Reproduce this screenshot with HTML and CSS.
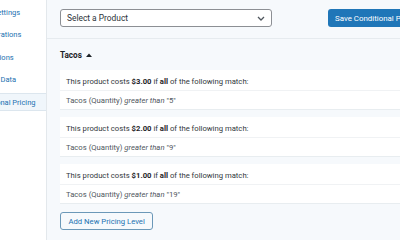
FILE: index.html
```html
<!DOCTYPE html>
<html lang="en">
<head>
  <meta charset="UTF-8">
  <meta name="viewport" content="width=device-width, initial-scale=1.0">
  <title>Conditional Pricing</title>
  <link rel="stylesheet" href="styles.css">
</head>
<body>
  <aside class="menu">
    <ul>
      <li><a href="#">Basic Settings</a></li>
      <li><a href="#">Configurations</a></li>
      <li><a href="#">Translations</a></li>
      <li><a href="#">Product Data</a></li>
      <li class="ativo"><a href="#">Conditional Pricing</a></li>
    </ul>
  </aside>

  <main class="conteudo">
    <div class="topo">
      <div class="seletor">
        <span>Select a Product</span>
        <svg width="8" height="5" viewBox="0 0 8 5"><path d="M1 1l3 3l3-3" fill="none" stroke="#50575e" stroke-width="1.3"/></svg>
      </div>
      <button class="salvar">Save Conditional Pricing</button>
    </div>

    <div class="produto">
      <b>Tacos</b>
      <svg width="6" height="4" viewBox="0 0 6 4"><path d="M0 4L3 0.5L6 4z" fill="#1d2327"/></svg>
    </div>

    <div class="niveis">
      <div class="nivel">
        <div class="linha">This product costs <b>$3.00</b> if <b>all</b> of the following match:</div>
        <div class="linha regra">Tacos (Quantity) <i>greater than</i> "5"</div>
      </div>
      <div class="nivel">
        <div class="linha">This product costs <b>$2.00</b> if <b>all</b> of the following match:</div>
        <div class="linha regra">Tacos (Quantity) <i>greater than</i> "9"</div>
      </div>
      <div class="nivel">
        <div class="linha">This product costs <b>$1.00</b> if <b>all</b> of the following match:</div>
        <div class="linha regra">Tacos (Quantity) <i>greater than</i> "19"</div>
      </div>
    </div>

    <button class="adicionar">Add New Pricing Level</button>
  </main>
</body>
</html>
```

FILE: styles.css
```css
body {
  margin: 0;
  height: 240px;
  display: flex;
  font-family: Roboto, "Liberation Sans", sans-serif;
  font-size: 7.7px;
  color: #32373c;
  overflow: hidden;
}
.menu {
  width: 46px;
  flex-shrink: 0;
  background-color: #ffffff;
  border-right: 1px solid #e3e8ec;
  overflow: hidden;
}
.menu ul {
  list-style: none;
  margin: 3px 0 0 -27.5px;
  padding: 0;
  display: flex;
  flex-direction: column;
  gap: 4.5px;
  width: 74px;
}
.menu li {
  height: 18px;
  display: flex;
  align-items: center;
  white-space: nowrap;
  border-top: 1px solid transparent;
  border-bottom: 1px solid transparent;
  box-sizing: border-box;
}
.menu a {
  color: #2271b1;
  text-decoration: none;
  font-size: 7.5px;
}
.menu .ativo {
  background-color: #f0f6fb;
  border-color: #dce6ee;
}
.conteudo {
  flex: 1;
  min-width: 0;
  background-color: #f6f9fc;
  overflow: hidden;
}
.topo {
  display: flex;
  align-items: center;
  gap: 56px;
  padding: 9px 0 11px 13px;
  border-bottom: 1px solid #e6ebef;
}
.seletor {
  width: 212px;
  height: 18px;
  box-sizing: border-box;
  flex-shrink: 0;
  display: flex;
  align-items: center;
  justify-content: space-between;
  padding: 0 6px;
  background-color: #ffffff;
  border: 1px solid #8c8f94;
  border-radius: 3px;
  font-size: 8.4px;
  color: #2c3338;
}
.salvar {
  height: 18px;
  flex-shrink: 0;
  padding: 0 7px;
  background-color: #1f76b8;
  color: #ffffff;
  border: none;
  border-radius: 3px;
  font-family: inherit;
  font-size: 7.9px;
}
.produto {
  display: flex;
  align-items: center;
  gap: 4px;
  padding: 11px 0 0 13px;
  height: 10px;
  font-size: 8.2px;
  color: #1d2327;
}
.niveis {
  display: flex;
  flex-direction: column;
  gap: 7px;
  margin: 10px 0 0 13px;
}
.nivel {
  background-color: #ffffff;
  border-bottom: 1px solid #e8edf0;
}
.linha {
  height: 20px;
  box-sizing: border-box;
  display: flex;
  align-items: center;
  white-space: pre;
  padding: 2px 0 0 6px;
}
.linha b {
  color: #1d2327;
}
.regra {
  height: 19px;
  padding-top: 0;
  border-top: 1px solid #f0f2f4;
  color: #50575e;
}
.adicionar {
  margin: 8px 0 0 13px;
  height: 18px;
  padding: 0 7.5px;
  background-color: #f6f9fc;
  color: #2271b1;
  border: 1px solid #6b98b8;
  border-radius: 3px;
  font-family: inherit;
  font-size: 7.7px;
}
```
